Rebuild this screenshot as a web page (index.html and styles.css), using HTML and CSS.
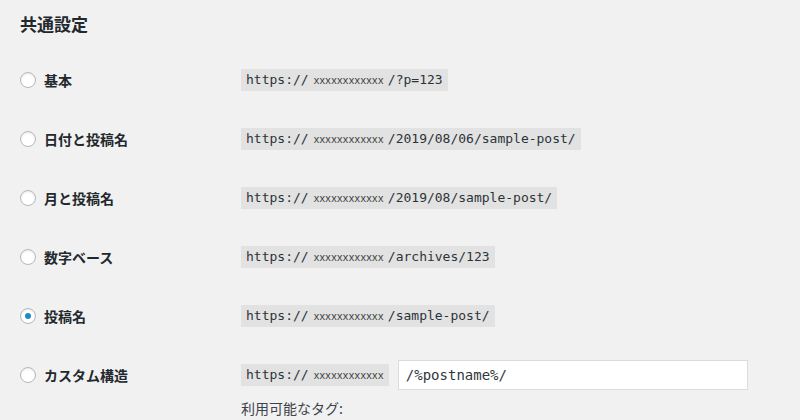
FILE: index.html
```html
<!DOCTYPE html>
<html lang="ja">
<head>
<meta charset="utf-8">
<title>共通設定</title>
<link rel="stylesheet" href="styles.css">
</head>
<body>
<div class="page">
  <h2 class="title">共通設定</h2>
  <div class="rows">
    <div class="row">
      <label class="choice"><span class="radio"></span><span class="label">基本</span></label>
      <div class="value"><div class="line"><code class="url">https://<span class="host">xxxxxxxxxxxx</span>/?p=123</code></div></div>
    </div>
    <div class="row">
      <label class="choice"><span class="radio"></span><span class="label">日付と投稿名</span></label>
      <div class="value"><div class="line"><code class="url">https://<span class="host">xxxxxxxxxxxx</span>/2019/08/06/sample-post/</code></div></div>
    </div>
    <div class="row">
      <label class="choice"><span class="radio"></span><span class="label">月と投稿名</span></label>
      <div class="value"><div class="line"><code class="url">https://<span class="host">xxxxxxxxxxxx</span>/2019/08/sample-post/</code></div></div>
    </div>
    <div class="row">
      <label class="choice"><span class="radio"></span><span class="label">数字ベース</span></label>
      <div class="value"><div class="line"><code class="url">https://<span class="host">xxxxxxxxxxxx</span>/archives/123</code></div></div>
    </div>
    <div class="row">
      <label class="choice"><span class="radio checked"></span><span class="label">投稿名</span></label>
      <div class="value"><div class="line"><code class="url">https://<span class="host">xxxxxxxxxxxx</span>/sample-post/</code></div></div>
    </div>
    <div class="row">
      <label class="choice"><span class="radio"></span><span class="label">カスタム構造</span></label>
      <div class="value">
        <div class="line"><code class="url">https://<span class="host host-end">xxxxxxxxxxxx</span></code><input class="structure" type="text" value="/%postname%/"></div>
        <p class="tags">利用可能なタグ:</p>
      </div>
    </div>
  </div>
</div>
</body>
</html>
```

FILE: styles.css
```css
html, body {
  margin: 0;
  padding: 0;
  background: #f1f1f1;
}
body {
  color: #23282d;
  font-family: "Noto Sans CJK JP", "Noto Sans", sans-serif;
  font-size: 14px;
}
.page {
  padding: 0 20px;
}
.title {
  margin: 0;
  padding-top: 12px;
  height: 38px;
  line-height: 24px;
  font-size: 17px;
  font-weight: 600;
  box-sizing: border-box;
}
.rows {
  display: flex;
  flex-direction: column;
}
.row {
  display: flex;
  align-items: flex-start;
  padding: 15px 0 14px;
}
.row:first-child {
  padding-top: 27px;
}
.choice {
  width: 221px;
  height: 30px;
  display: flex;
  align-items: center;
  gap: 8px;
  flex-shrink: 0;
}
.radio {
  width: 16px;
  height: 16px;
  box-sizing: border-box;
  border: 1px solid #b4b9be;
  border-radius: 50%;
  background: #fff;
  box-shadow: inset 0 1px 2px rgba(0,0,0,0.1);
  display: flex;
  align-items: center;
  justify-content: center;
}
.radio.checked::before {
  content: "";
  width: 6px;
  height: 6px;
  border-radius: 50%;
  background: #1e8cbe;
}
.label {
  font-weight: 600;
  line-height: 20px;
}
.value {
  display: flex;
  flex-direction: column;
}
.line {
  height: 30px;
  display: flex;
  align-items: center;
  gap: 9px;
}
.url {
  display: inline-flex;
  align-items: baseline;
  background: #e2e2e2;
  padding: 2px 5px 2px 5px;
  font-family: "DejaVu Sans Mono", "Liberation Mono", monospace;
  font-size: 13px;
  line-height: 17px;
  color: #2c3338;
}
.host {
  font-family: "Liberation Sans", sans-serif;
  font-size: 11px;
  letter-spacing: 0.35px;
  color: #444;
  margin: 0 4px 0 5px;
}
.host-end {
  margin-right: 0;
}
.structure {
  width: 350px;
  height: 30px;
  box-sizing: border-box;
  border: 1px solid #dcdcdc;
  background: #fff;
  padding: 0 7px;
  margin: 0;
  font-family: "DejaVu Sans Mono", "Liberation Mono", monospace;
  font-size: 14px;
  color: #32373c;
  outline: none;
}
.tags {
  margin: 8px 0 0;
  line-height: 20px;
  font-size: 14px;
  color: #3c434a;
}
```
